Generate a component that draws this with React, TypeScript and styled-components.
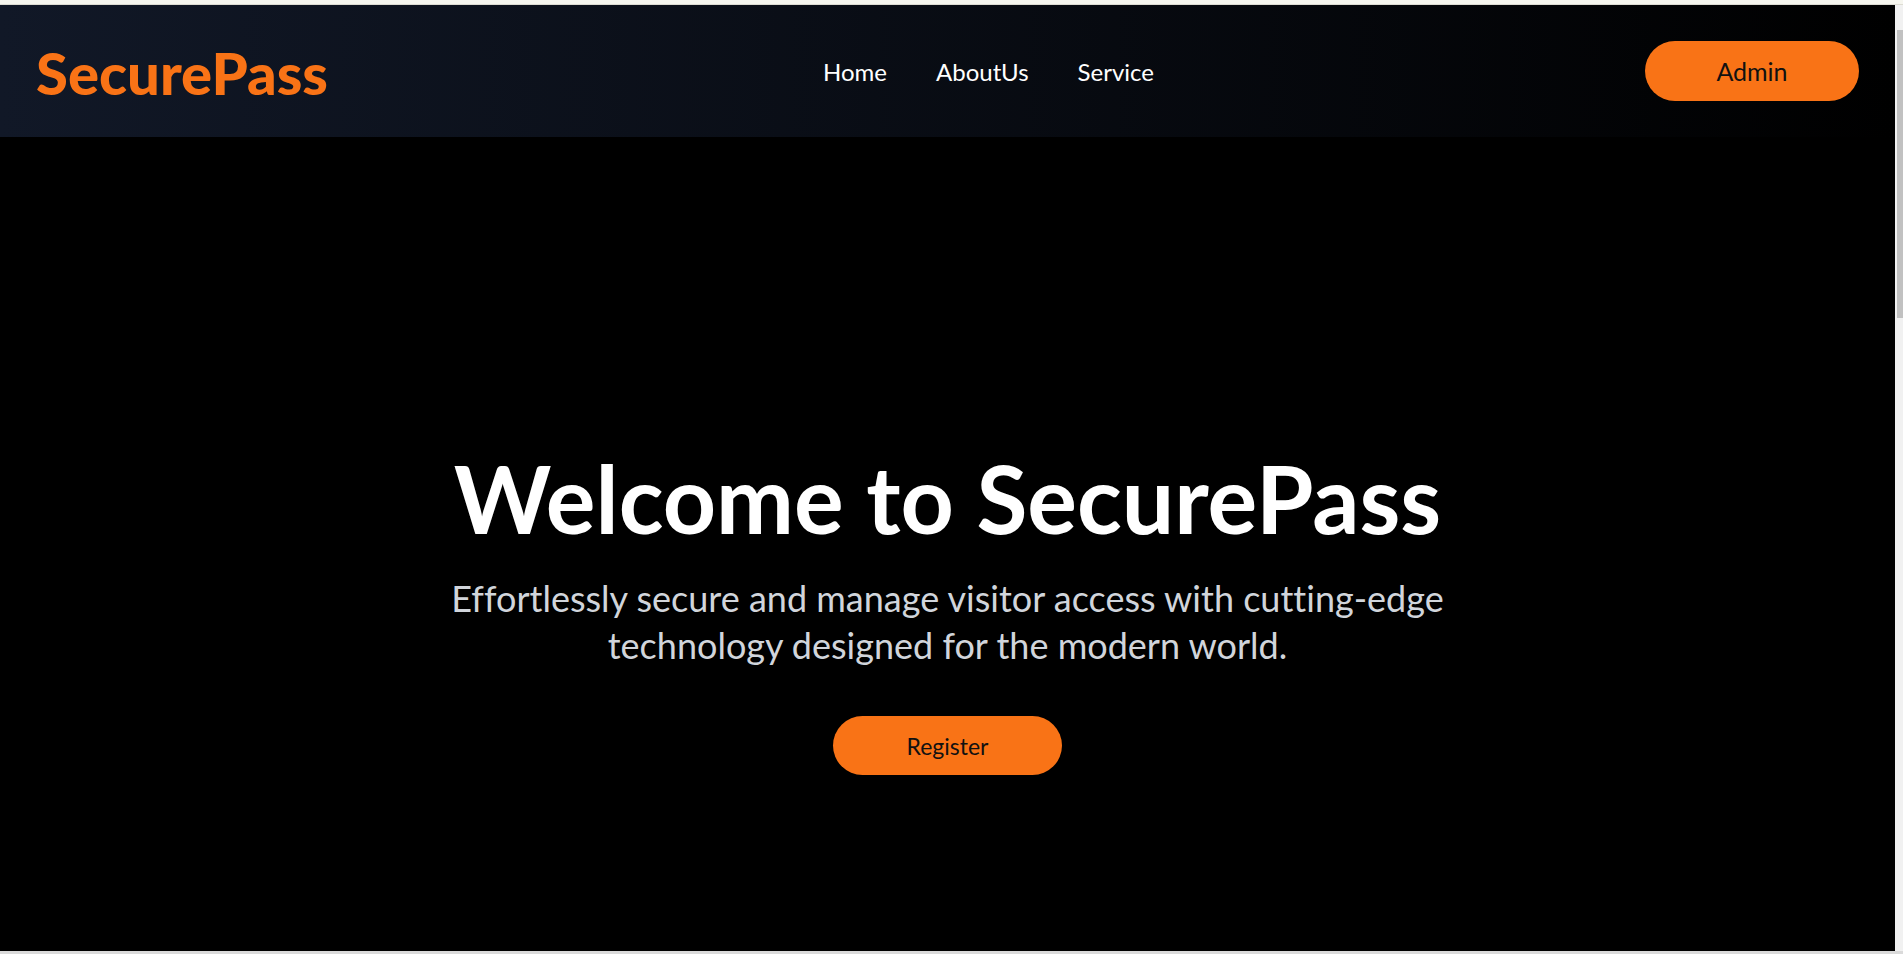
import React from "react";
import styled, { createGlobalStyle } from "styled-components";

const GlobalStyle = createGlobalStyle`
  html, body {
    margin: 0;
    padding: 0;
    height: 100%;
    overflow: hidden;
    background: #f0f0f0;
  }
  #root {
    height: 100%;
  }
  * {
    box-sizing: border-box;
  }
`;

const Frame = styled.div`
  display: grid;
  grid-template-columns: 1fr 8px;
  grid-template-rows: 5px 1fr 3px;
  height: 954px;
  width: 1903px;
  font-family: Lato, "Open Sans", sans-serif;
  font-variant-ligatures: none;
`;

const TopStrip = styled.div`
  grid-column: 1 / 3;
  background: #f6f6ef;
  border-bottom: 1px solid #dddcd3;
`;

const BottomStrip = styled.div`
  grid-column: 1 / 3;
  background: #dadada;
`;

const ScrollTrack = styled.div`
  background: #f1f1f1;
  display: flex;
  flex-direction: column;
  align-items: flex-end;
  padding-top: 25px;
`;

const ScrollThumb = styled.div`
  width: 6px;
  height: 288px;
  background: #c1c1c1;
`;

const Page = styled.div`
  display: flex;
  flex-direction: column;
  background: #000;
  min-height: 0;
`;

const Header = styled.header`
  height: 132px;
  flex-shrink: 0;
  display: flex;
  align-items: center;
  justify-content: space-between;
  padding: 0 36px;
  background: linear-gradient(to right, #111827, #000000);
`;

const Logo = styled.div`
  color: #f97316;
  font-weight: 900;
  font-size: 58px;
  line-height: 1;
  margin-top: 4px;
`;

const Nav = styled.nav`
  display: flex;
  gap: 49px;
  margin-left: 4px;
`;

const NavLink = styled.a`
  color: #ffffff;
  font-size: 24px;
  text-decoration: none;
  line-height: 1;
  margin-top: 2px;
`;

const PillButton = styled.button<{ $w: number; $h: number; $size: number }>`
  width: ${(p) => p.$w}px;
  height: ${(p) => p.$h}px;
  border: none;
  border-radius: 9999px;
  background: #f97316;
  color: #111111;
  font-family: inherit;
  font-variant-ligatures: none;
  font-size: ${(p) => p.$size}px;
  cursor: pointer;
  padding: 0;
`;

const Hero = styled.main`
  flex: 1;
  display: flex;
  flex-direction: column;
  align-items: center;
  justify-content: flex-start;
  text-align: center;
  padding-top: 310px;
`;

const Title = styled.h1`
  margin: 0;
  color: #ffffff;
  font-size: 93px;
  font-weight: 700;
  line-height: 1.1;
`;

const Subtitle = styled.p`
  margin: 26px 0 0;
  color: #d1d5db;
  font-size: 36px;
  line-height: 47px;
  max-width: 1100px;
`;

const HeroAction = styled.div`
  margin-top: 47px;
`;

export default function App() {
  return (
    <>
      <GlobalStyle />
      <Frame>
        <TopStrip />
        <Page>
          <Header>
            <Logo>SecurePass</Logo>
            <Nav>
              <NavLink href="#">Home</NavLink>
              <NavLink href="#">AboutUs</NavLink>
              <NavLink href="#">Service</NavLink>
            </Nav>
            <PillButton $w={214} $h={60} $size={25}>
              Admin
            </PillButton>
          </Header>
          <Hero>
            <Title>Welcome to SecurePass</Title>
            <Subtitle>
              Effortlessly secure and manage visitor access with cutting-edge
              technology designed for the modern world.
            </Subtitle>
            <HeroAction>
              <PillButton $w={229} $h={59} $size={23}>
                Register
              </PillButton>
            </HeroAction>
          </Hero>
        </Page>
        <ScrollTrack>
          <ScrollThumb />
        </ScrollTrack>
        <BottomStrip />
      </Frame>
    </>
  );
}
